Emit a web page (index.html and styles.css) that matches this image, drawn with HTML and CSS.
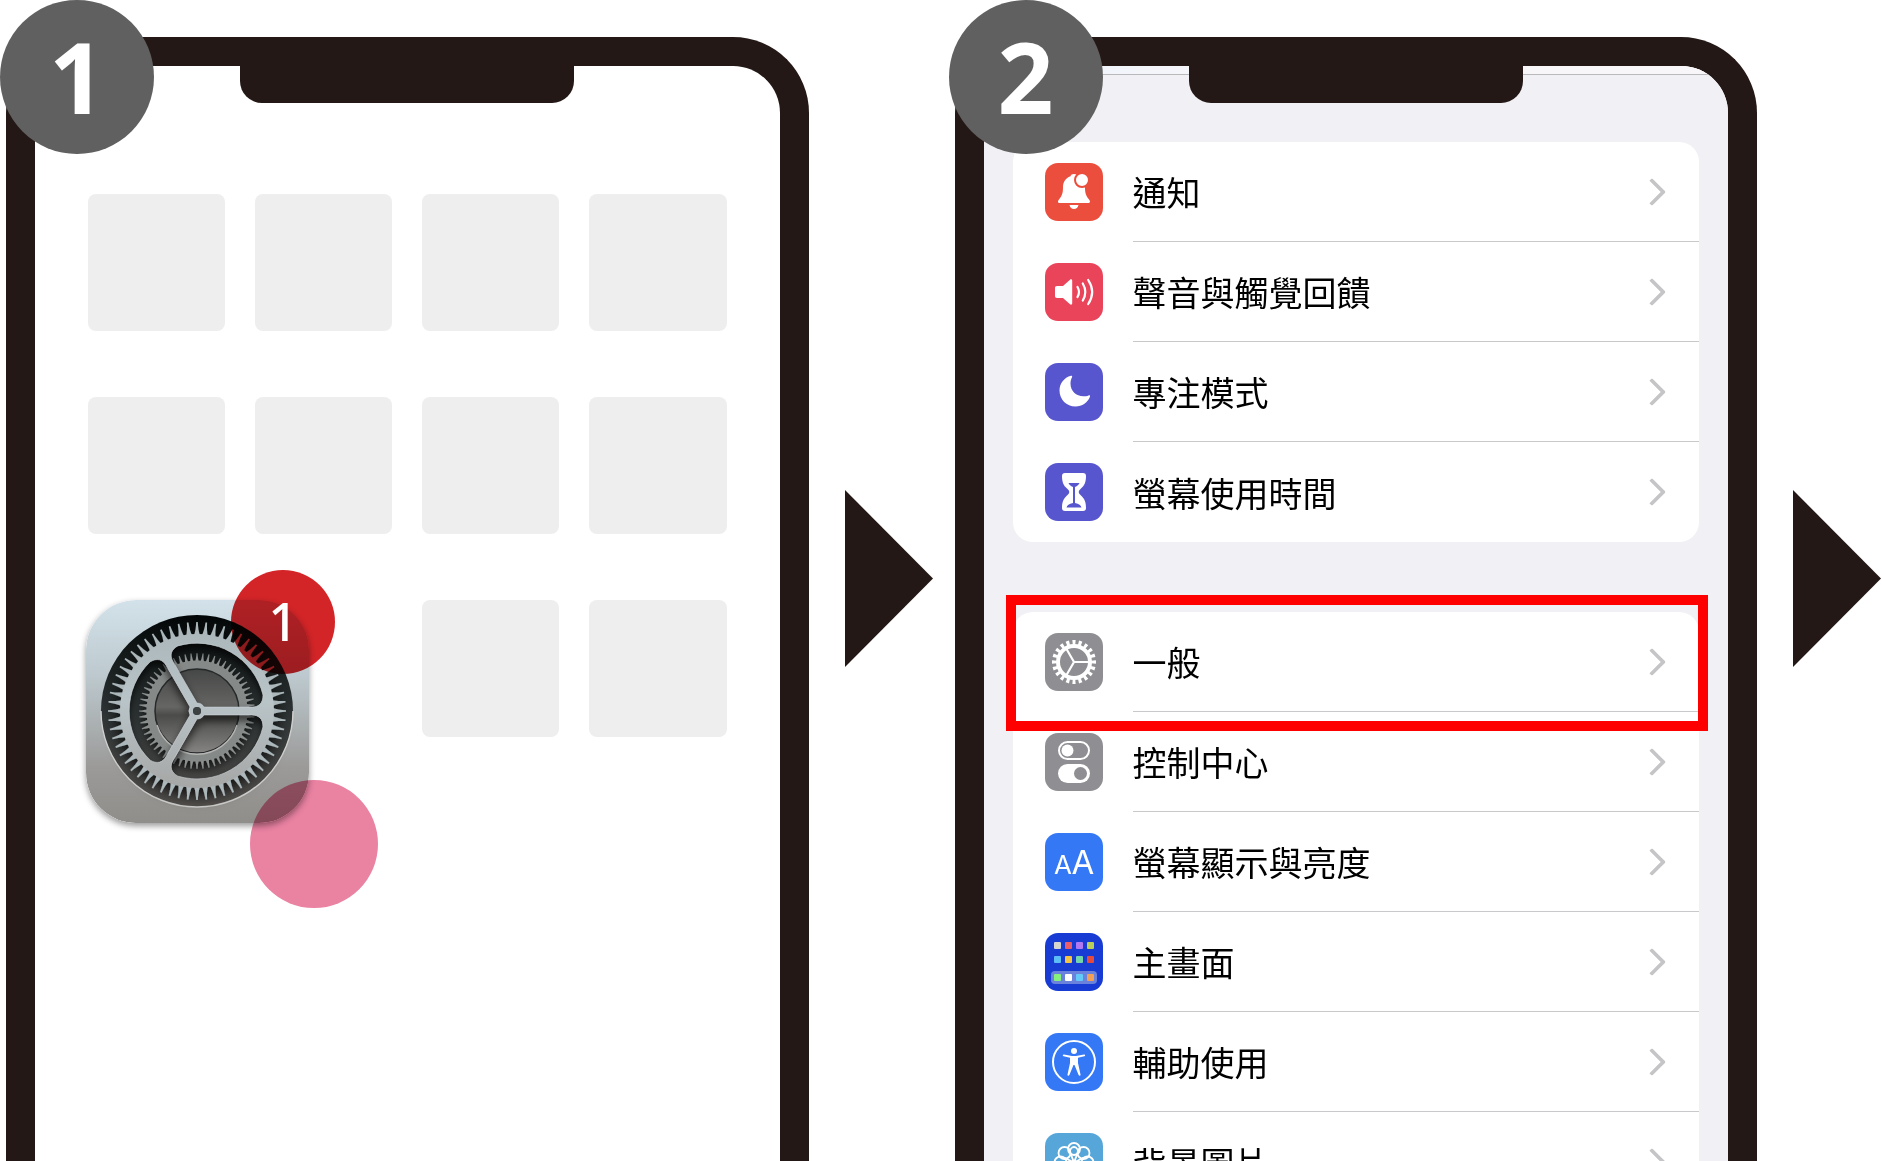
FILE: index.html
```html
<!DOCTYPE html>
<html lang="zh-Hant">
<head>
    <meta charset="UTF-8">
    <meta name="viewport" content="width=device-width, initial-scale=1.0">
    <title>設定步驟</title>
    <link rel="stylesheet" href="styles.css">
</head>
<body>
    <main class="steps">
        <section class="step">
            <div class="step-number">1</div>
            <div class="phone">
                <div class="notch"></div>
                <div class="screen home">
                    <div class="app"></div>
                    <div class="app"></div>
                    <div class="app"></div>
                    <div class="app"></div>
                    <div class="app"></div>
                    <div class="app"></div>
                    <div class="app"></div>
                    <div class="app"></div>
                    <a class="settings-app" href="#settings" aria-label="設定">
                        <svg class="settings-icon" viewBox="0 0 223 223" aria-hidden="true">
                            <defs>
                                <linearGradient id="plate" x1="0" y1="0" x2="0" y2="1">
                                    <stop offset="0" stop-color="#d3e2ea"/>
                                    <stop offset=".35" stop-color="#bcc8cd"/>
                                    <stop offset=".75" stop-color="#9b9a99"/>
                                    <stop offset="1" stop-color="#908e8a"/>
                                </linearGradient>
                                <linearGradient id="hole" x1="0" y1="0" x2="0" y2="1">
                                    <stop offset="0" stop-color="#020606"/>
                                    <stop offset=".5" stop-color="#2d3334"/>
                                    <stop offset="1" stop-color="#55524f"/>
                                </linearGradient>
                                <linearGradient id="metal" gradientUnits="userSpaceOnUse" x1="0" y1="-90" x2="0" y2="90">
                                    <stop offset="0" stop-color="#a9b5b9"/>
                                    <stop offset=".45" stop-color="#b9c4c8"/>
                                    <stop offset="1" stop-color="#a3a2a1"/>
                                </linearGradient>
                                <linearGradient id="disc" x1="0" y1="0" x2="0" y2="1">
                                    <stop offset="0" stop-color="#454746"/>
                                    <stop offset=".45" stop-color="#666664"/>
                                    <stop offset=".55" stop-color="#4b4b4a"/>
                                    <stop offset="1" stop-color="#858482"/>
                                </linearGradient>
                                <filter id="drop" x="-20%" y="-20%" width="140%" height="140%">
                                    <feDropShadow dx="0" dy="5" stdDeviation="4" flood-color="#000" flood-opacity=".75"/>
                                </filter>
                                <path id="tooth" d="M-3.2-75C-1.600-79-1.100-84-.8-89H.8C1.100-84 1.600-79 3.200-75Z"/>
                                <g id="teeth3">
                                    <use href="#tooth"/>
                                    <use href="#tooth" transform="rotate(6)"/>
                                    <use href="#tooth" transform="rotate(12)"/>
                                </g>
                                <g id="teeth12">
                                    <use href="#teeth3"/>
                                    <use href="#teeth3" transform="rotate(18)"/>
                                    <use href="#teeth3" transform="rotate(36)"/>
                                    <use href="#teeth3" transform="rotate(54)"/>
                                </g>
                                <g id="teeth">
                                    <use href="#teeth12"/>
                                    <use href="#teeth12" transform="rotate(72)"/>
                                    <use href="#teeth12" transform="rotate(144)"/>
                                    <use href="#teeth12" transform="rotate(216)"/>
                                    <use href="#teeth12" transform="rotate(288)"/>
                                </g>
                                <path id="window" d="M7-4H55C62-4 66-8 66-16A68 68 0 0 0-19.2-65.1C-26.1-61.2-27.5-55.7-24-49.6L0-8A8 8 0 0 1 7-4Z"/>
                                <g id="windows">
                                    <use href="#window"/>
                                    <use href="#window" transform="rotate(120)"/>
                                    <use href="#window" transform="rotate(240)"/>
                                </g>
                                <mask id="spokes" maskUnits="userSpaceOnUse" x="-95" y="-95" width="190" height="190">
                                    <circle r="95" fill="#fff"/>
                                    <use href="#windows" fill="#000"/>
                                    <circle r="4" fill="#000"/>
                                </mask>
                            </defs>
                            <rect width="223" height="223" rx="50" fill="url(#plate)"/>
                            <g transform="translate(111 111)">
                                <circle r="96" fill="url(#hole)"/>
                                <path d="M-96 0A96 96 0 0 0 96 0" fill="none" stroke="#d2d2d0" stroke-width="1.4"/>
                                <!-- 後方小齒輪 -->
                                <g filter="url(#drop)">
                                    <use href="#teeth" transform="scale(.65)" fill="#8b908f"/>
                                    <circle r="46" fill="none" stroke="#858988" stroke-width="9"/>
                                </g>
                                <circle r="42" fill="url(#disc)"/>
                                <circle r="42" fill="none" stroke="#26292a" stroke-width="1.5"/>
                                <path d="M-40 14A42 42 0 0 0 40 14" fill="none" stroke="#b5b5b3" stroke-width="1.4"/>
                                <!-- 前方大齒輪 -->
                                <g filter="url(#drop)">
                                    <g mask="url(#spokes)" fill="url(#metal)">
                                        <use href="#teeth"/>
                                        <circle r="77"/>
                                    </g>
                                </g>
                                <use href="#windows" fill="none" stroke="#d5dcdf" stroke-opacity=".6" stroke-width=".8"/>
                                <circle r="4" fill="#3c4142"/>
                            </g>
                        </svg>
                        <span class="badge"><span>1</span></span>
                        <span class="tap"></span>
                    </a>
                    <div class="app"></div>
                    <div class="app"></div>
                </div>
            </div>
        </section>

        <svg class="arrow" viewBox="0 0 88 177" aria-hidden="true"><path d="M0 0 88 88.500 0 177Z"/></svg>

        <section class="step">
            <div class="step-number">2</div>
            <div class="phone">
                <div class="notch"></div>
                <div class="screen settings">
                    <div class="status-bar"></div>
                    <nav class="card">
                        <a class="row" href="#notifications">
                            <svg class="icon red" viewBox="0 0 58 58" aria-hidden="true">
                                <path d="M29 11c-2 0-3 .8-3.500 2.200C20.500 15 18 19 18 24c0 6-.8 8.500-4 12.500-1.700 2-1.200 3.500 1 3.500h28c2.200 0 2.700-1.500 1-3.500-3.200-4-4-6.500-4-12.500 0-5-2.500-9-7.500-10.800C32 11.800 31 11 29 11ZM24.500 42h9c-.5 2.500-2.300 4-4.500 4s-4-1.500-4.500-4Z" fill="#fff"/>
                                <circle cx="37" cy="17" r="7" fill="#fff" stroke="#eb4e3d" stroke-width="2"/>
                            </svg>
                            <span class="label">通知</span>
                        </a>
                        <a class="row" href="#sounds">
                            <svg class="icon pink" viewBox="0 0 58 58" aria-hidden="true">
                                <path d="M12 23h6l7-6.200c1-.9 2.200-.4 2.200 1v22.400c0 1.400-1.200 1.900-2.200 1l-7-6.200h-6c-1.300 0-2-.7-2-2v-8c0-1.300.7-2 2-2Z" fill="#fff"/>
                                <path d="M32.500 24q3 5 0 10M37.800 20.500q5 8.500 0 17M43.200 17q8 12 0 24" fill="none" stroke="#fff" stroke-width="2.200" stroke-linecap="round"/>
                            </svg>
                            <span class="label">聲音與觸覺回饋</span>
                        </a>
                        <a class="row" href="#focus">
                            <svg class="icon purple" viewBox="0 0 58 58" aria-hidden="true">
                                <path d="M26 12.700C19 14.500 14.500 20.500 14.500 27.500c0 9 7 16 16 16 6.500 0 12.500-4 14.500-10 .3-1-.5-1.500-1.500-1.100-1.500.6-3.500.8-5 .8-7.500 0-13-5.200-13-12.700 0-2.500.5-4.500 1.500-6.300.5-1 0-1.700-1-1.500Z" fill="#fff"/>
                            </svg>
                            <span class="label">專注模式</span>
                        </a>
                        <a class="row" href="#screen-time">
                            <svg class="icon purple" viewBox="0 0 58 58" aria-hidden="true">
                                <path d="M20 10h18c2 0 3 1 3 3 0 6-1.500 9.500-5 12.500-3 2.500-3 4.500 0 7 3.500 3 5 6.500 5 12.500 0 2-1 3-3 3H20c-2 0-3-1-3-3 0-6 1.500-9.500 5-12.500 3-2.500 3-4.500 0-7-3.500-3-5-6.500-5-12.500 0-2 1-3 3-3Z" fill="#fff"/>
                                <path d="M23.500 20h11c-.8 1.600-2 3-4.500 4v16c4 1 6 2 6.500 4.500h-15C22 42 24 41 28 40V24c-2.500-1-3.700-2.400-4.500-4Z" fill="#5856ce"/>
                            </svg>
                            <span class="label">螢幕使用時間</span>
                        </a>
                    </nav>
                    <nav class="card">
                        <a class="row highlight" href="#general">
                            <svg class="icon gray" viewBox="0 0 58 58" aria-hidden="true">
                                <g fill="none" stroke="#fff">
                                    <circle cx="29" cy="29" r="16" stroke-width="4"/>
                                    <circle cx="29" cy="29" r="19.500" stroke-width="5" pathLength="80" stroke-dasharray="2 2" stroke-dashoffset="1"/>
                                    <path d="M29 29h15M29 29l-7.500-13M29 29l-7.500 13" stroke-width="2.200"/>
                                </g>
                            </svg>
                            <span class="label">一般</span>
                        </a>
                        <a class="row" href="#control-center">
                            <svg class="icon gray" viewBox="0 0 58 58" aria-hidden="true">
                                <rect x="14" y="9" width="30" height="17" rx="8.500" fill="none" stroke="#fff" stroke-width="2"/>
                                <circle cx="22.500" cy="17.500" r="6" fill="#fff"/>
                                <rect x="13" y="31" width="32" height="19" rx="9.500" fill="#fff"/>
                                <circle cx="35.500" cy="40.500" r="6.500" fill="#8e8e93"/>
                            </svg>
                            <span class="label">控制中心</span>
                        </a>
                        <a class="row" href="#display">
                            <svg class="icon blue" viewBox="0 0 58 58" aria-hidden="true">
                                <text class="letter-small" x="18" y="41">A</text>
                                <text class="letter-big" x="38" y="41">A</text>
                            </svg>
                            <span class="label">螢幕顯示與亮度</span>
                        </a>
                        <a class="row" href="#home-screen">
                            <svg class="icon navy" viewBox="0 0 58 58" aria-hidden="true">
                                <rect x="6" y="38" width="46" height="13" rx="4" fill="#6a82dc"/>
                                <rect x="9" y="9" width="7" height="7" rx="1" fill="#d6d6cf"/>
                                <rect x="20" y="9" width="7" height="7" rx="1" fill="#ed5f68"/>
                                <rect x="31" y="9" width="7" height="7" rx="1" fill="#b278f2"/>
                                <rect x="42" y="9" width="7" height="7" rx="1" fill="#b9cf57"/>
                                <rect x="9" y="23" width="7" height="7" rx="1" fill="#5cbcf6"/>
                                <rect x="20" y="23" width="7" height="7" rx="1" fill="#f5c445"/>
                                <rect x="31" y="23" width="7" height="7" rx="1" fill="#72d5ac"/>
                                <rect x="42" y="23" width="7" height="7" rx="1" fill="#e64a3c"/>
                                <rect x="9" y="41" width="7" height="7" rx="1" fill="#85f07c"/>
                                <rect x="20" y="41" width="7" height="7" rx="1" fill="#fff"/>
                                <rect x="31" y="41" width="7" height="7" rx="1" fill="#62c9f8"/>
                                <rect x="42" y="41" width="7" height="7" rx="1" fill="#f1a055"/>
                            </svg>
                            <span class="label">主畫面</span>
                        </a>
                        <a class="row" href="#accessibility">
                            <svg class="icon blue" viewBox="0 0 58 58" aria-hidden="true">
                                <circle cx="29" cy="29" r="21" fill="none" stroke="#fff" stroke-width="2"/>
                                <circle cx="29" cy="18" r="3" fill="#fff"/>
                                <path d="M19 21.500 27 23h4l8-1.500c1.400-.2 1.600 1.500.3 1.800L33 24.800V30l2.500 11.500c.2 1.400-1.400 1.800-1.900.5L29.500 32h-1l-4.100 10c-.5 1.300-2.100.9-1.900-.5L25 30v-5.200l-6.300-1.500c-1.300-.3-1.100-2 .3-1.800Z" fill="#fff"/>
                            </svg>
                            <span class="label">輔助使用</span>
                        </a>
                        <a class="row" href="#wallpaper">
                            <svg class="icon sky" viewBox="0 0 58 58" aria-hidden="true">
                                <g fill="none" stroke="#fff" stroke-width="1.800">
                                    <circle cx="29" cy="16" r="6"/>
                                    <circle cx="38.500" cy="20" r="6"/>
                                    <circle cx="42.500" cy="29.500" r="6"/>
                                    <circle cx="38.500" cy="39" r="6"/>
                                    <circle cx="29" cy="43" r="6"/>
                                    <circle cx="19.500" cy="39" r="6"/>
                                    <circle cx="15.500" cy="29.500" r="6"/>
                                    <circle cx="19.500" cy="20" r="6"/>
                                    <path d="M29 29.500 25 19a4 5 0 0 1 8 0ZM29 29.500l-10-5M29 29.500l10-5"/>
                                </g>
                            </svg>
                            <span class="label">背景圖片</span>
                        </a>
                    </nav>
                </div>
            </div>
        </section>

        <svg class="arrow" viewBox="0 0 88 177" aria-hidden="true"><path d="M0 0 88 88.500 0 177Z"/></svg>
    </main>
</body>
</html>
```
FILE: styles.css
```css
* {
    box-sizing: border-box;
}
body {
    margin: 0;
    background-color: #fff;
    color: #000;
    font-family: 'Noto Sans CJK TC', sans-serif;
}
.steps {
    display: flex;
    height: 100vh;
    padding-right: 1px;
    overflow: hidden;
}
.step {
    position: relative;
    flex: 1;
    min-width: 0;
    padding: 37px 0 0 6px;
}
.step-number {
    position: absolute;
    top: 0;
    left: 0;
    z-index: 2;
    width: 154px;
    height: 154px;
    border-radius: 50%;
    background-color: #606060;
    color: #fff;
    font: bold 98px/152px 'Open Sans', sans-serif;
    text-align: center;
}
.arrow {
    flex: none;
    width: 88px;
    height: 177px;
    margin: 490px 0 0 36px;
    fill: #231815;
}
.arrow + .step {
    margin-left: 16px;
}

/* 手機外框 */
.phone {
    position: relative;
    height: 100%;
    border: 29px solid #231815;
    border-bottom: 0;
    border-radius: 76px 76px 0 0;
}
.notch {
    position: absolute;
    top: -1px;
    left: 50%;
    z-index: 1;
    width: 334px;
    height: 38px;
    transform: translateX(-50%);
    border-radius: 0 0 22px 22px;
    background-color: #231815;
}
.screen {
    height: 100%;
    border-radius: 47px 47px 0 0;
}

/* 主畫面 */
.home {
    display: grid;
    grid-template-columns: repeat(4, 1fr);
    grid-auto-rows: 137px;
    align-content: start;
    gap: 66px 30px;
    padding: 128px 53px 0;
}
.app {
    border-radius: 8px;
    background-color: #eee;
}
.settings-app {
    position: relative;
    grid-column: span 2;
    margin-left: -2px;
    color: #fff;
    text-decoration: none;
}
.settings-icon {
    display: block;
    width: 223px;
    height: 223px;
    border-radius: 50px;
    box-shadow: 0 3px 6px rgba(0, 0, 0, 0.4);
}
.badge {
    position: absolute;
    top: -30px;
    left: 145px;
    width: 104px;
    height: 104px;
    font: 500 52px/102px 'Noto Sans', sans-serif;
    text-align: center;
}
.badge::before {
    content: '';
    position: absolute;
    inset: 0;
    border-radius: 50%;
    background-color: #d32427;
    mix-blend-mode: multiply;
}
.badge span {
    position: relative;
}
.tap {
    position: absolute;
    top: 180px;
    left: 164px;
    width: 128px;
    height: 128px;
    border-radius: 50%;
    background-color: #ea82a2;
    mix-blend-mode: multiply;
}

/* 設定列表 */
.settings {
    padding: 0 29px;
    overflow: hidden;
    background-color: #f1f0f5;
}
.status-bar {
    height: 9px;
    margin: 0 -29px 67px;
    border-bottom: 1px solid #b9b9bb;
    background: linear-gradient(to right, #edf4fc, #f8f6f9 40%);
}
.card {
    margin-bottom: 70px;
    border-radius: 20px;
    background-color: #fff;
}
.row {
    position: relative;
    display: flex;
    align-items: center;
    gap: 30px;
    height: 100px;
    padding-left: 32px;
    color: #000;
    text-decoration: none;
}
.icon {
    flex: none;
    width: 58px;
    height: 58px;
    border-radius: 13px;
}
.label {
    display: flex;
    flex: 1;
    align-items: center;
    justify-content: space-between;
    height: 100px;
    padding-right: 37px;
    border-bottom: 1px solid #c9c9cb;
    font-size: 34px;
}
.row:last-child .label {
    border-bottom: 0;
}
.label::after {
    content: '';
    width: 16px;
    height: 16px;
    border: solid #c5c5c7;
    border-width: 4px 4px 0 0;
    border-radius: 2px;
    transform: rotate(45deg);
}
.highlight::after {
    content: '';
    position: absolute;
    inset: -17px -9px -19px -7px;
    z-index: 1;
    border: 10px solid #f00;
}
.red {
    background-color: #eb4e3d;
}
.pink {
    background-color: #ea445a;
}
.purple {
    background-color: #5856ce;
}
.gray {
    background-color: #8e8e93;
}
.blue {
    background-color: #3478f6;
}
.navy {
    background-color: #173bd3;
}
.sky {
    background-color: #57a6d9;
}
.letter-small,
.letter-big {
    fill: #fff;
    font-family: Inter, sans-serif;
    font-size: 26px;
    text-anchor: middle;
}
.letter-big {
    font-size: 33px;
}
```
